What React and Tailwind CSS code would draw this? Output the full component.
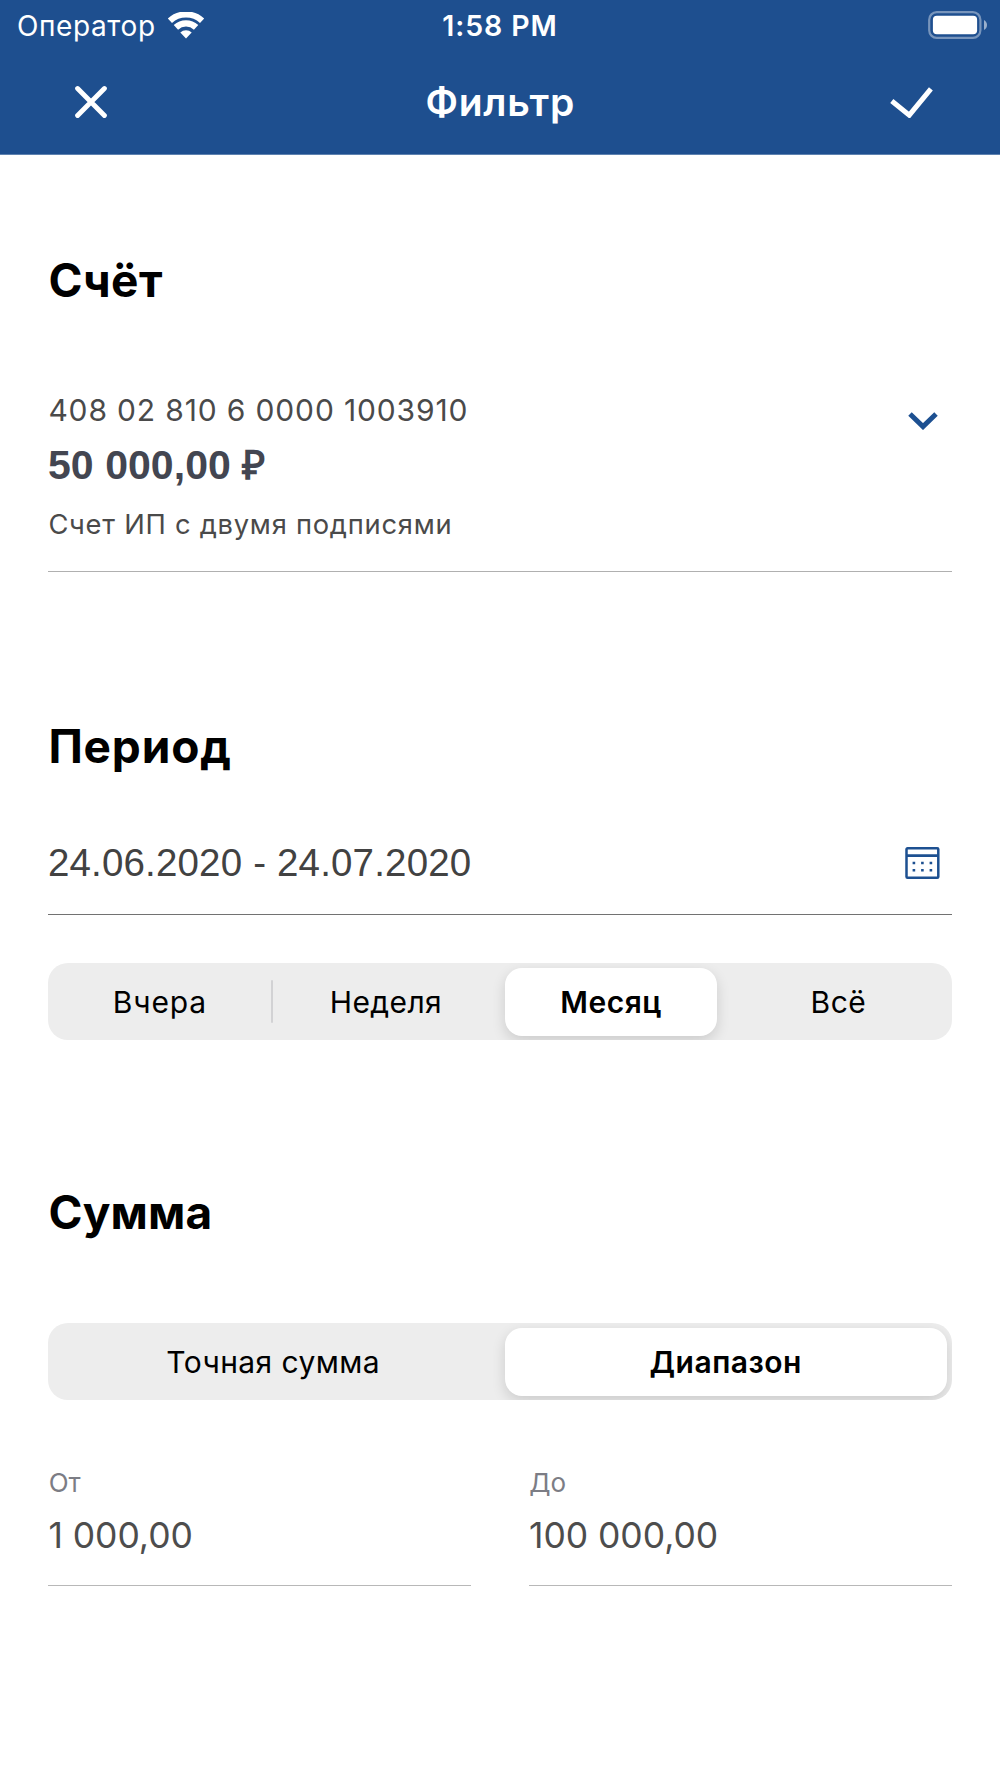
function WifiIcon() {
  return (
    <svg className="ml-[11px] h-[28px] w-[38px]" viewBox="0 0 38 28" fill="none">
      <path d="M2.9 8.7A23.9 23.9 0 0 1 35.1 8.7" stroke="#fff" strokeWidth="6.2" />
      <path d="M8.9 15.3A14.9 14.9 0 0 1 29.1 15.3" stroke="#fff" strokeWidth="6.4" />
      <path d="M19 26.4L13.3 20.4A8.3 8.3 0 0 1 24.7 20.4Z" fill="#fff" />
    </svg>
  );
}

function BatteryIcon() {
  return (
    <svg className="-mt-[3px] h-[28px] w-[60px]" viewBox="0 0 60 28" fill="none">
      <rect x="1.2" y="1.2" width="51.2" height="25.6" rx="7.5" stroke="#fff" strokeOpacity=".4" strokeWidth="2.2" />
      <rect x="4.9" y="4.8" width="44.2" height="18.4" rx="4" fill="#fff" />
      <path d="M56 9C60 11 60 17 56 19Z" fill="#fff" fillOpacity=".55" />
    </svg>
  );
}

function CloseIcon() {
  return (
    <svg className="h-8 w-8" viewBox="0 0 32 32" fill="none">
      <path d="M2.6 2.6L29.4 29.4M29.4 2.6L2.6 29.4" stroke="#fff" strokeWidth="4.9" strokeLinecap="round" />
    </svg>
  );
}

function CheckIcon() {
  return (
    <svg className="h-[32px] w-[44px]" viewBox="0 0 44 32" fill="none">
      <path d="M2.8 15L20.3 29.2L41.9 2.8" stroke="#fff" strokeWidth="5" />
    </svg>
  );
}

function ChevronIcon() {
  return (
    <svg className="h-[18px] w-[30px]" viewBox="0 0 30 18" fill="none">
      <path d="M2 2L15 14.6L28 2" stroke="#1d5091" strokeWidth="5" />
    </svg>
  );
}

function CalendarIcon() {
  return (
    <svg className="h-[32px] w-[35px]" viewBox="0 0 35 32" fill="none">
      <rect x="1.5" y="1.3" width="31.8" height="29.4" rx="1" stroke="#1d5091" strokeWidth="2.5" />
      <path d="M1.5 8.6H33.5" stroke="#1d5091" strokeWidth="2.6" />
      <path
        d="M7.6 16h2.6M16.1 16h2.6M24.6 16h2.6M7.6 23.2h2.6M16.1 23.2h2.6M24.6 23.2h2.6"
        stroke="#1d5091"
        strokeWidth="2.5"
      />
    </svg>
  );
}

function Heading({ className = "tracking-[0.5px]", children }) {
  return <h2 className={"text-[46px] leading-[56px] font-bold text-black " + className}>{children}</h2>;
}

function Segments({ children }) {
  return (
    <div className="flex h-[77px] overflow-hidden rounded-[20px] bg-[#ededed] pt-px text-[30px] tracking-[0.4px] text-black">
      {children}
    </div>
  );
}

function Selected({ className, children }) {
  return (
    <button
      className={
        "mt-[4px] flex h-[67.5px] items-center justify-center rounded-[17px] bg-white pt-[2px] font-semibold tracking-[0.5px] shadow-[0_5px_14px_rgba(0,0,0,0.14)] " +
        className
      }
    >
      {children}
    </button>
  );
}

function Field({ label, value }) {
  return (
    <div className="flex-1 border-b border-[#b8b8b8]">
      <div className="pt-px pl-[0.3px] text-[26px] leading-[32px] text-[#7c7d85]">{label}</div>
      <div className="mt-[15px] mb-[27px] text-[35.5px] leading-[44px] tracking-[-0.05px] text-[#4d4d4d]">{value}</div>
    </div>
  );
}

export default function App() {
  return (
    <div className="h-[1778px] w-[1000px] overflow-hidden bg-white font-['Inter',sans-serif]">
      <header className="h-[155px] border-b border-[#5e82b0] bg-[#1e4f8f] text-white">
        <div className="grid h-[52px] grid-cols-3 items-center">
          <div className="flex items-center pl-[17px]">
            <span className="text-[28px] leading-[52px] tracking-[0.6px]">Оператор</span>
            <WifiIcon />
          </div>
          <span className="text-center text-[28.5px] leading-[52px] font-semibold tracking-[0.9px]">1:58 PM</span>
          <div className="flex justify-end pr-[12px]">
            <BatteryIcon />
          </div>
        </div>
        <div className="grid h-[100px] grid-cols-3 items-center pr-[67.5px] pl-[74.6px]">
          <button className="w-[44px]">
            <CloseIcon />
          </button>
          <h1 className="-ml-[6.5px] text-center text-[39px] leading-[48px] font-semibold tracking-[0.7px]">Фильтр</h1>
          <button className="justify-self-end">
            <CheckIcon />
          </button>
        </div>
      </header>

      <main className="px-[48.4px]">
        <section className="pt-[97px]">
          <Heading>Счёт</Heading>
          <div className="mt-[84px] flex justify-between border-b border-[#b0b0b0] pb-[29px]">
            <div className="text-[#4a4a4a]">
              <div className="text-[30px] leading-[36px] tracking-[0.85px]">408 02 810 6 0000 1003910</div>
              <div className="mt-[13px] -ml-[0.4px] font-['Liberation_Sans',sans-serif] text-[41px] leading-[48px] font-bold tracking-[0.05px] text-[#434651]">
                50 000,00 <span className="text-[40px]">₽</span>
              </div>
              <div className="mt-[19px] text-[27.3px] leading-[34px] tracking-[0.75px]">Счет ИП с двумя подписями</div>
            </div>
            <div className="pt-[20px] pr-[14px]">
              <ChevronIcon />
            </div>
          </div>
        </section>

        <section className="pt-[146px]">
          <Heading className="tracking-[0.85px]">Период</Heading>
          <div className="mt-[66px] flex items-center justify-between pb-[28px]">
            <span className="-ml-[0.5px] font-['Liberation_Sans',sans-serif] text-[38.5px] leading-[46px] tracking-[0.17px] text-[#424242]">
              24.06.2020 - 24.07.2020
            </span>
            <div className="mr-[11.6px]">
              <CalendarIcon />
            </div>
          </div>
          <div className="h-px bg-[#727272]" />
          <div className="mt-12">
            <Segments>
              <button className="w-[223px] tracking-[0.9px]">Вчера</button>
              <span className="mt-[16px] h-[43px] w-[2px] rounded-full bg-[#d2d2d4]" />
              <button className="w-[225px]">Неделя</button>
              <Selected className="ml-[6.7px] w-[212px]">Месяц</Selected>
              <button className="ml-[8px] flex-1">Всё</button>
            </Segments>
          </div>
        </section>

        <section className="pt-[144px]">
          <Heading className="tracking-[0.1px]">Сумма</Heading>
          <div className="mt-[83px]">
            <Segments>
              <button className="w-[449.5px]">Точная сумма</button>
              <Selected className="ml-[7px] w-[441.7px]">Диапазон</Selected>
            </Segments>
          </div>
          <div className="mt-[66px] flex gap-[58px]">
            <Field label="От" value="1 000,00" />
            <Field label="До" value="100 000,00" />
          </div>
        </section>
      </main>
    </div>
  );
}
